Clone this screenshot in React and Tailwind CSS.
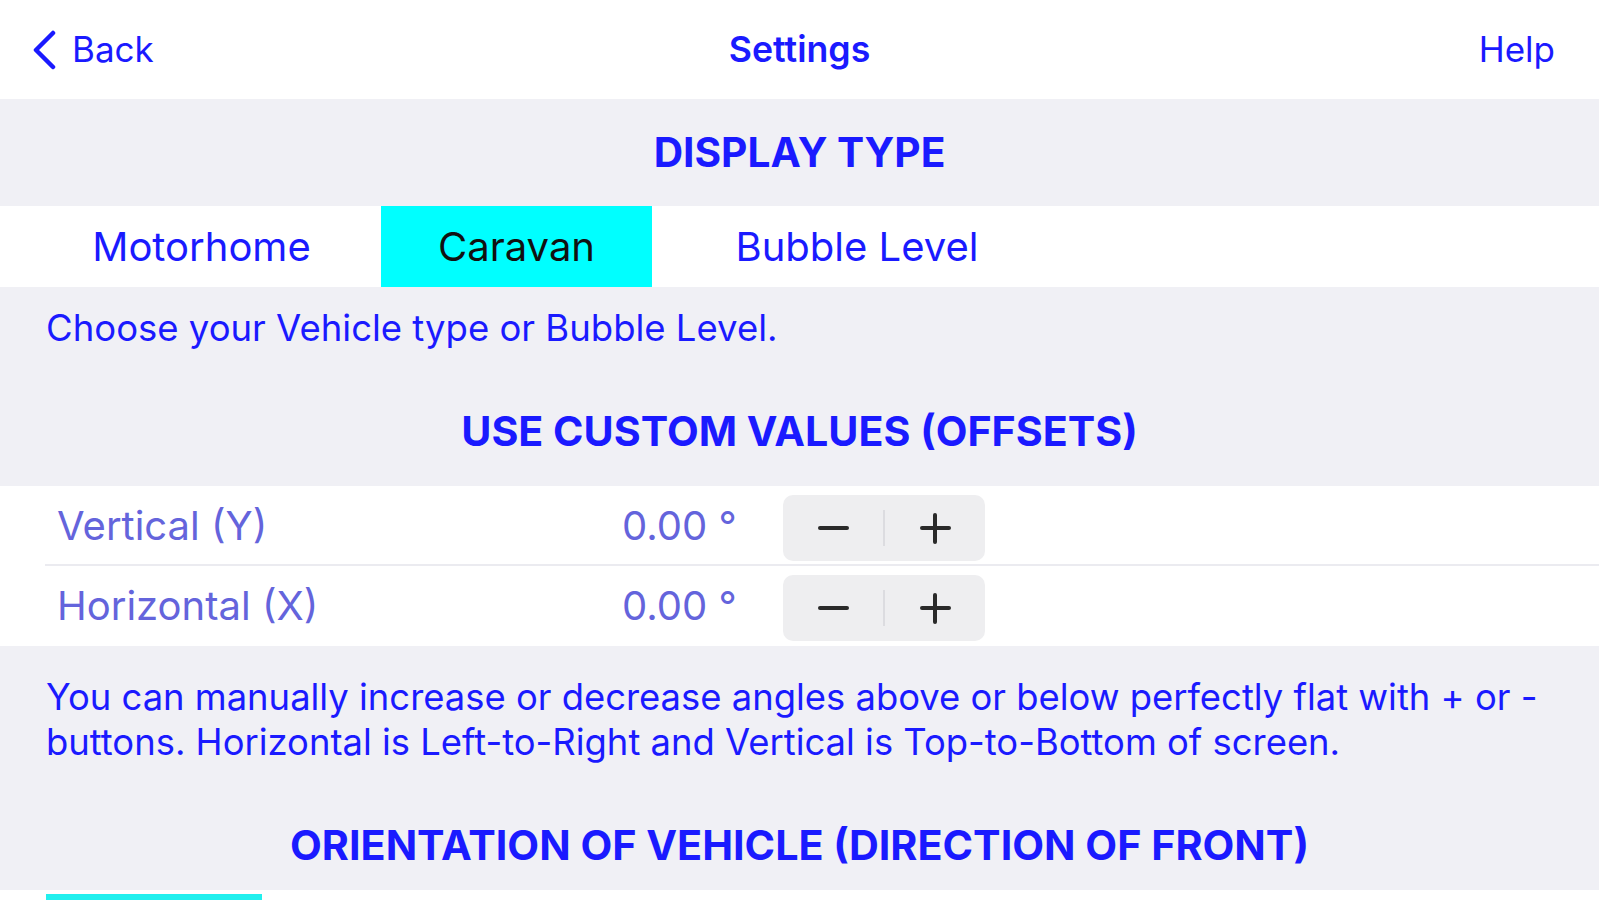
import React, { useState } from 'react';

const blue = 'text-[#1a1aff]';

const Stepper = () => (
  <div className="flex items-center w-[202px] h-[66px] rounded-[10px] bg-[#eeeef0]">
    <button className="flex-1 h-full flex items-center justify-center">
      <span className="block w-[31px] h-[4px] rounded-full bg-[#2a2a2a]" />
    </button>
    <span className="w-[2px] h-[36px] bg-[#dcdce0]" />
    <button className="flex-1 h-full flex items-center justify-center">
      <span className="relative block w-[31px] h-[31px]">
        <span className="absolute left-0 top-[13.5px] w-[31px] h-[4px] rounded-full bg-[#2a2a2a]" />
        <span className="absolute top-0 left-[13.5px] w-[4px] h-[31px] rounded-full bg-[#2a2a2a]" />
      </span>
    </button>
  </div>
);

const OffsetRow = ({ label, value, last }) => (
  <div className="relative flex items-center h-[80px] bg-white">
    <div className="w-[622px] pl-[57px] text-[40px] text-[#6464dc]">{label}</div>
    <div className="w-[161px] text-[40px] text-[#6464dc]">{value}</div>
    <div className="pt-[4px]">
      <Stepper />
    </div>
    {!last && <div className="absolute left-[45px] right-0 bottom-0 h-[2px] bg-[#ebebf0]" />}
  </div>
);

export default function App() {
  const [type, setType] = useState('Caravan');
  const segments = [
    { name: 'Motorhome', w: 'w-[359px]' },
    { name: 'Caravan', w: 'w-[271px]' },
    { name: 'Bubble Level', w: 'w-[410px]' },
  ];

  return (
    <div className="w-[1599px] h-[900px] overflow-hidden bg-[#f0f0f5] font-['Inter',sans-serif]">
      {/* nav bar */}
      <div className="relative h-[99px] bg-white flex items-center justify-between px-[32px]">
        <button className={`flex items-center gap-[16px] ${blue}`}>
          <svg width="24" height="40" viewBox="0 0 24 40" fill="none">
            <path d="M21 3 L4 20 L21 37" stroke="#1a1aff" strokeWidth="4.5" strokeLinecap="round" strokeLinejoin="round" />
          </svg>
          <span className="text-[35px]">Back</span>
        </button>
        <div className={`absolute left-0 right-0 text-center text-[35.7px] font-semibold pointer-events-none ${blue}`}>Settings</div>
        <button className={`text-[35px] pr-[12px] ${blue}`}>Help</button>
      </div>

      {/* display type */}
      <div className={`h-[107px] flex items-center justify-center text-[40.7px] font-bold ${blue}`}>DISPLAY TYPE</div>
      <div className="h-[81px] bg-white flex pl-[22px]">
        {segments.map((s) => (
          <button
            key={s.name}
            onClick={() => setType(s.name)}
            className={`${s.w} h-full flex items-center justify-center text-[40px] ${
              type === s.name ? 'bg-[#00ffff] text-[#111111]' : blue
            }`}
          >
            {s.name}
          </button>
        ))}
      </div>
      <div className={`h-[82px] flex items-center pl-[46px] text-[36.5px] ${blue}`}>
        Choose your Vehicle type or Bubble Level.
      </div>

      {/* offsets */}
      <div className={`h-[117px] pt-[8px] flex items-center justify-center text-[41.2px] font-bold ${blue}`}>
        USE CUSTOM VALUES (OFFSETS)
      </div>
      <div>
        <OffsetRow label="Vertical (Y)" value="0.00 °" />
        <OffsetRow label="Horizontal (X)" value="0.00 °" last />
      </div>
      <div className={`pt-[29px] pl-[46px] pr-[50px] text-[36.4px] leading-[45px] ${blue}`}>
        You can manually increase or decrease angles above or below perfectly flat with + or - buttons. Horizontal is Left-to-Right and Vertical is Top-to-Bottom of screen.
      </div>

      {/* orientation */}
      <div className={`h-[125px] pt-[36px] flex items-center justify-center text-[41.3px] font-bold ${blue}`}>
        ORIENTATION OF VEHICLE (DIRECTION OF FRONT)
      </div>
      <div className="h-[10px] bg-white pl-[46px] pt-[4px]">
        <div className="w-[216px] h-[6px] bg-[#22f0ee]" />
      </div>
    </div>
  );
}
